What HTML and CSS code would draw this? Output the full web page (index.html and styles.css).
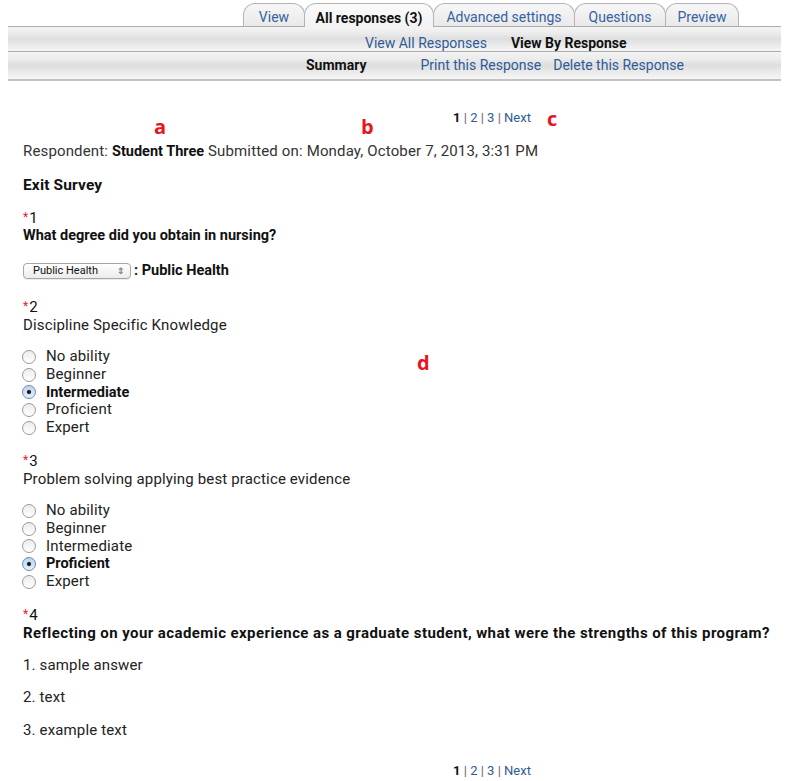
FILE: index.html
```html
<!DOCTYPE html>
<html>
<head>
<meta charset="utf-8">
<link rel="stylesheet" href="styles.css">
</head>
<body>
<div class="page">
  <div class="tabrow">
    <div class="tab"><a href="#">View</a></div>
    <div class="tab active"><span>All responses (3)</span></div>
    <div class="tab"><a href="#">Advanced settings</a></div>
    <div class="tab"><a href="#">Questions</a></div>
    <div class="tab"><a href="#">Preview</a></div>
  </div>
  <div class="bar bar1">
    <div class="barinner">
      <a href="#" class="b1a">View All Responses</a>
      <span class="cur b1b">View By Response</span>
    </div>
  </div>
  <div class="bar bar2">
    <div class="barinner">
      <span class="cur b2a">Summary</span>
      <a href="#" class="b2b">Print this Response</a>
      <a href="#" class="b2c">Delete this Response</a>
    </div>
  </div>

  <div class="content">
    <div class="pager"><span class="pinner"><b>1</b> <i>|</i> <a href="#">2</a> <i>|</i> <a href="#">3</a> <i>|</i> <a href="#">Next</a></span></div>
    <div class="respondent">Respondent: <b>Student Three</b> Submitted on: Monday, October 7, 2013, 3:31 PM</div>
    <div class="survey-title">Exit Survey</div>

    <div class="qnum q1"><span class="req">*</span>1</div>
    <div class="qtext bold">What degree did you obtain in nursing?</div>
    <div class="selrow">
      <span class="select"><span class="seltext">Public Health</span><span class="arrows">&#8661;</span></span><b>: Public Health</b>
    </div>

    <div class="qnum q2"><span class="req">*</span>2</div>
    <div class="qtext">Discipline Specific Knowledge</div>
    <div class="radios">
      <div class="ropt"><span class="radio"></span>No ability</div>
      <div class="ropt"><span class="radio"></span>Beginner</div>
      <div class="ropt sel"><span class="radio on"></span>Intermediate</div>
      <div class="ropt"><span class="radio"></span>Proficient</div>
      <div class="ropt"><span class="radio"></span>Expert</div>
    </div>

    <div class="qnum q3"><span class="req">*</span>3</div>
    <div class="qtext">Problem solving applying best practice evidence</div>
    <div class="radios">
      <div class="ropt"><span class="radio"></span>No ability</div>
      <div class="ropt"><span class="radio"></span>Beginner</div>
      <div class="ropt"><span class="radio"></span>Intermediate</div>
      <div class="ropt sel"><span class="radio on"></span>Proficient</div>
      <div class="ropt"><span class="radio"></span>Expert</div>
    </div>

    <div class="qnum q4"><span class="req">*</span>4</div>
    <div class="qtext bold wide">Reflecting on your academic experience as a graduate student, what were the strengths of this program?</div>
    <div class="answers">
      <div class="ans">1. sample answer</div>
      <div class="ans">2. text</div>
      <div class="ans">3. example text</div>
    </div>

    <div class="pager bottom"><span class="pinner"><b>1</b> <i>|</i> <a href="#">2</a> <i>|</i> <a href="#">3</a> <i>|</i> <a href="#">Next</a></span></div>
  </div>

  <span class="mark mark-a">a</span>
  <span class="mark mark-b">b</span>
  <span class="mark mark-c">c</span>
  <span class="mark mark-d">d</span>
</div>
</body>
</html>
```

FILE: styles.css
```css
html, body {
  margin: 0;
  padding: 0;
  background: #fff;
}
body {
  font-family: Roboto, "Liberation Sans", Arial, sans-serif;
  font-size: 14px;
  color: #333;
}
a {
  color: #2f5b97;
  text-decoration: none;
}
.page {
  position: relative;
  width: 791px;
  height: 781px;
  overflow: hidden;
}

/* Tabs */
.tabrow {
  display: flex;
  align-items: flex-end;
  height: 26px;
  padding-left: 243px;
  box-sizing: border-box;
}
.tab {
  height: 23px;
  box-sizing: border-box;
  border: 1px solid #b4b4b4;
  border-bottom: none;
  border-radius: 12px 12px 0 0;
  background: linear-gradient(#f7f7f7, #e9e9e9);
  display: flex;
  align-items: center;
  justify-content: center;
  font-size: 14px;
  line-height: 16px;
  padding-top: 4px;
}
.tab:nth-child(1) { width: 62px; }
.tab:nth-child(2) { width: 130px; }
.tab:nth-child(3) { width: 142px; }
.tab:nth-child(4) { width: 92px; }
.tab:nth-child(5) { width: 74px; }
.tab + .tab { margin-left: -1px; }
.tab a { color: #3562a0; }
.tab.active {
  background: linear-gradient(#fafafa, #f2f2f2);
  font-weight: bold;
  color: #111;
  height: 24px;
  margin-bottom: -1px;
  position: relative;
  z-index: 1;
}

/* Bars */
.bar {
  margin: 0 10px 0 8px;
  border-top: 1px solid #ababab;
  background: linear-gradient(#f4f4f4 0%, #ececec 25%, #dedede 50%, #e8e8e8 70%, #f6f6f6 100%);
  box-sizing: border-box;
}
.bar1 {
  height: 25px;
  padding-top: 8px;
}
.bar2 {
  height: 30px;
  padding-top: 5px;
  border-bottom: 2px solid #c2c2c2;
}
.barinner {
  display: flex;
  line-height: 16px;
  font-size: 14px;
}
.cur {
  font-weight: bold;
  color: #111;
}
.b1a { margin-left: 357px; }
.b1b { margin-left: 24px; }
.b2a { margin-left: 298px; }
.b2b { margin-left: 54px; }
.b2c { margin-left: 12px; }

/* Content */
.content {
  padding: 0 15px 0 23px;
  line-height: 18px;
  font-size: 15px;
  letter-spacing: 0.15px;
}
.content b,
.bold,
.sel {
  font-size: 14.5px;
  letter-spacing: 0;
}
.pager {
  margin-top: 28px;
  padding-left: 430px;
  letter-spacing: 0;
}
.pager,
.pager b {
  font-size: 13px;
}
.pager b { color: #111; }
.pager i {
  font-style: normal;
  color: #666;
}
.pager.bottom { margin-top: 23px; }
.respondent { margin-top: 15px; }
.respondent b { color: #111; }
.survey-title {
  margin-top: 15px;
  font-weight: bold;
  font-size: 15.5px;
  color: #111;
}
.qnum {
  color: #111;
  height: 19px;
}
.q1 { margin-top: 14px; }
.q2 { margin-top: 17px; }
.q3 { margin-top: 14px; }
.q4 { margin-top: 14px; }
.req {
  color: #e0262b;
  font-size: 12px;
  vertical-align: 2px;
  margin-right: 1px;
}
.qtext { color: #222; }
.qtext.bold {
  font-weight: bold;
  color: #111;
}
.qtext.bold.wide {
  font-size: 15px;
  letter-spacing: 0.42px;
}
.selrow {
  margin-top: 17px;
  display: flex;
  align-items: center;
  height: 18px;
}
.selrow b { color: #111; }
.select {
  display: inline-flex;
  align-items: center;
  justify-content: space-between;
  width: 108px;
  height: 16px;
  box-sizing: border-box;
  border: 1px solid #a6a6a6;
  border-radius: 4px;
  background: linear-gradient(#ffffff, #ececec);
  font-size: 11px;
  letter-spacing: 0;
  color: #111;
  padding: 0 5px 0 9px;
  margin-right: 3px;
  box-shadow: 0 1px 0 rgba(0,0,0,0.08);
}
.seltext { line-height: 14px; }
.arrows {
  font-size: 9px;
  color: #555;
  line-height: 14px;
}
.radios { margin-top: 14px; }
.ropt {
  display: flex;
  align-items: center;
  height: 17.8px;
  line-height: 17.8px;
  color: #222;
}
.ropt.sel {
  font-weight: bold;
  color: #111;
}
.radio {
  width: 12px;
  height: 12px;
  border-radius: 50%;
  border: 1px solid #9a9a9a;
  background: linear-gradient(#ececec, #ffffff);
  box-sizing: content-box;
  margin-left: -1px;
  margin-right: 10px;
  flex: none;
}
.radio.on {
  border-color: #6a8ab5;
  background: radial-gradient(circle at 50% 50%, #1b1b1b 0, #1b1b1b 1.5px, rgba(27,27,27,0) 2.6px), linear-gradient(#bcd3f0, #e6f0fc);
}
.answers { margin-top: 14px; }
.ans { color: #222; }
.ans + .ans { margin-top: 14.5px; }

/* Annotation letters */
.mark {
  position: absolute;
  font-family: "Open Sans", "DejaVu Sans", sans-serif;
  font-weight: bold;
  font-size: 20px;
  line-height: 20px;
  color: #e8141e;
}
.mark-a { left: 154px; top: 117px; }
.mark-b { left: 361px; top: 117px; }
.mark-c { left: 547px; top: 109px; }
.mark-d { left: 417px; top: 353px; }
```
